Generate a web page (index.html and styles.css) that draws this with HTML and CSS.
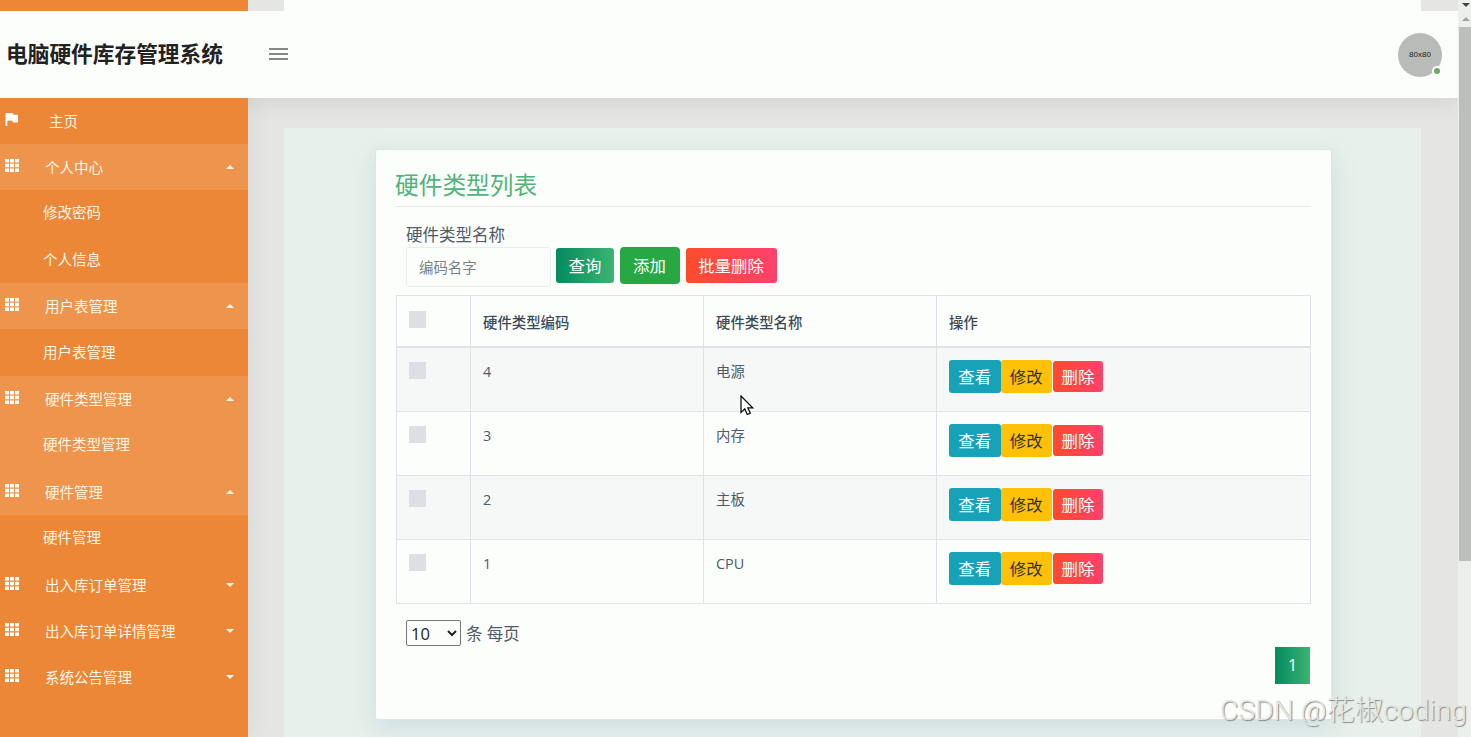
FILE: index.html
```html
<!DOCTYPE html>
<html lang="zh-CN">
<head>
    <meta charset="UTF-8">
    <meta name="viewport" content="width=device-width, initial-scale=1.0">
    <title>电脑硬件库存管理系统</title>
    <link rel="stylesheet" href="styles.css">
</head>
<body>
    <svg class="sprite" width="0" height="0">
        <symbol id="grid" viewBox="0 0 14 13">
            <path d="M0 0h4v3.4H0zM5 0h4v3.4H5zM10 0h4v3.4h-4zM0 4.8h4v3.4H0zM5 4.8h4v3.4H5zM10 4.8h4v3.4h-4zM0 9.6h4V13H0zM5 9.6h4V13H5zM10 9.6h4V13h-4z"/>
        </symbol>
    </svg>

    <div class="page">
        <div class="top-strip">
            <div class="strip-side"></div>
            <div class="strip-main"></div>
        </div>

        <header class="header">
            <h1 class="brand">电脑硬件库存管理系统</h1>
            <div class="toggle"><span></span><span></span><span></span></div>
            <div class="avatar">80x80<i class="online"></i></div>
        </header>

        <div class="wrapper">
            <nav class="sidebar">
                <a class="item home"><svg class="icon" viewBox="0 0 14 14"><path d="M0 0h8l.6 1.8H13.500v8.400H7.800L7.200 8.400H2V14H0z"/></svg><span>主页</span></a>
                <a class="item open"><svg class="icon"><use href="#grid"/></svg><span>个人中心</span><i class="caret up"></i></a>
                <a class="item sub">修改密码</a>
                <a class="item sub">个人信息</a>
                <a class="item open"><svg class="icon"><use href="#grid"/></svg><span>用户表管理</span><i class="caret up"></i></a>
                <a class="item sub">用户表管理</a>
                <a class="item open"><svg class="icon"><use href="#grid"/></svg><span>硬件类型管理</span><i class="caret up"></i></a>
                <a class="item sub active">硬件类型管理</a>
                <a class="item open"><svg class="icon"><use href="#grid"/></svg><span>硬件管理</span><i class="caret up"></i></a>
                <a class="item sub">硬件管理</a>
                <a class="item"><svg class="icon"><use href="#grid"/></svg><span>出入库订单管理</span><i class="caret"></i></a>
                <a class="item"><svg class="icon"><use href="#grid"/></svg><span>出入库订单详情管理</span><i class="caret"></i></a>
                <a class="item"><svg class="icon"><use href="#grid"/></svg><span>系统公告管理</span><i class="caret"></i></a>
            </nav>

            <main class="content">
                <div class="panel">
                    <div class="card">
                        <h3 class="title">硬件类型列表</h3>
                        <div class="search">
                            <label>硬件类型名称</label>
                            <div class="search-row">
                                <input type="text" class="field" placeholder="编码名字">
                                <button class="btn query">查询</button>
                                <button class="btn add">添加</button>
                                <button class="btn danger">批量删除</button>
                            </div>
                        </div>
                        <table class="table">
                            <thead>
                                <tr>
                                    <th class="col-check"><i class="check"></i></th>
                                    <th class="col-data">硬件类型编码</th>
                                    <th class="col-data">硬件类型名称</th>
                                    <th>操作</th>
                                </tr>
                            </thead>
                            <tbody>
                                <tr>
                                    <td><i class="check"></i></td><td>4</td><td>电源</td>
                                    <td><div class="actions"><button class="btn view">查看</button><button class="btn edit">修改</button><button class="btn danger">删除</button></div></td>
                                </tr>
                                <tr>
                                    <td><i class="check"></i></td><td>3</td><td>内存</td>
                                    <td><div class="actions"><button class="btn view">查看</button><button class="btn edit">修改</button><button class="btn danger">删除</button></div></td>
                                </tr>
                                <tr>
                                    <td><i class="check"></i></td><td>2</td><td>主板</td>
                                    <td><div class="actions"><button class="btn view">查看</button><button class="btn edit">修改</button><button class="btn danger">删除</button></div></td>
                                </tr>
                                <tr>
                                    <td><i class="check"></i></td><td>1</td><td>CPU</td>
                                    <td><div class="actions"><button class="btn view">查看</button><button class="btn edit">修改</button><button class="btn danger">删除</button></div></td>
                                </tr>
                            </tbody>
                        </table>
                        <div class="page-size">
                            <select><option>10</option></select>
                            <span>条 每页</span>
                        </div>
                        <div class="pagination"><a class="page-link">1</a></div>
                    </div>
                </div>
            </main>
        </div>
    </div>

    <div class="scrollbar">
        <i class="arrow down"></i>
        <i class="arrow"></i>
        <div class="thumb"></div>
    </div>

    <svg class="cursor" viewBox="0 0 14 21"><path d="M1 1v16.500l3.800-3.600 2.500 5.600 3-1.300-2.500-5.400h4.900z" fill="#fff" stroke="#111" stroke-width="1.300"/></svg>
    <div class="watermark">CSDN @花椒coding</div>
</body>
</html>
```
FILE: styles.css
```css
* {
    box-sizing: border-box;
}
body {
    margin: 0;
    display: flex;
    height: 737px;
    overflow: hidden;
    background: #e5e6e3;
    font-family: "Open Sans", "Noto Sans CJK SC", sans-serif;
    color: #4f5b6a;
}
.sprite {
    position: absolute;
}
.page {
    flex: 1;
    display: flex;
    flex-direction: column;
}

/* header */
.top-strip {
    position: relative;
    z-index: 3;
    height: 11px;
    flex: none;
    display: flex;
    background: #e5e6e3;
}
.strip-side {
    width: 248px;
    background: #eb8736;
}
.strip-main {
    width: 1137px;
    margin-left: 36px;
    background: #fcfefb;
}
.header {
    position: relative;
    z-index: 2;
    height: 86.500px;
    flex: none;
    display: flex;
    align-items: center;
    padding: 0 16px 0 6px;
    background: #fcfefb;
    box-shadow: 0 2px 24px rgba(0, 0, 0, 0.1);
}
.brand {
    width: 263px;
    margin: 0;
    font-size: 21.700px;
    line-height: 32px;
    font-weight: bold;
    color: #222;
}
.toggle {
    width: 19px;
    display: flex;
    flex-direction: column;
    gap: 3px;
}
.toggle span {
    height: 2px;
    background: #858784;
}
.avatar {
    position: relative;
    width: 44px;
    height: 44px;
    margin: 1px 0 0 auto;
    border-radius: 50%;
    background: #b9bbb8;
    font: 8px/44px "Liberation Sans", sans-serif;
    text-align: center;
    color: #222;
}
.online {
    position: absolute;
    right: 0;
    bottom: 1px;
    width: 10px;
    height: 10px;
    border: 2px solid #fcfefb;
    border-radius: 50%;
    background: #6aaa64;
}

/* sidebar */
.wrapper {
    flex: 1;
    display: flex;
    min-height: 0;
}
.sidebar {
    position: relative;
    z-index: 3;
    width: 248px;
    flex: none;
    background: #eb8736;
    box-shadow: 2px 0 24px rgba(0, 0, 0, 0.06);
    clip-path: inset(0 -40px 0 0);
}
.item {
    display: flex;
    align-items: center;
    height: 46.400px;
    padding: 0 14px 0 5px;
    font-size: 14.500px;
    color: #fff6e8;
}
.home span {
    margin-left: 4px;
}
.sub {
    padding: 0 0 3px 43px;
}
.open, .active {
    background: #ee944c;
}
.icon {
    width: 14px;
    height: 13px;
    margin: -3px 26px 0 0;
    fill: #fffdf8;
}
.caret {
    margin: 0 0 0 auto;
    border: 4px solid transparent;
    border-bottom: 0;
    border-top-color: #fff6e8;
}
.caret.up {
    border-top: 0;
    border-bottom: 4px solid #fff6e8;
}
.item span {
    margin-top: -1px;
}

/* content */
.content {
    flex: 1;
    padding: 30.500px 37px 0 36px;
}
.panel {
    height: 100%;
    padding: 21px 89px 0 91px;
    background: #e7f0ea;
}
.card {
    height: 571px;
    padding: 19px 20px 18px;
    border: 1px solid #dce5ea;
    border-radius: 3px;
    background: #fcfefb;
    box-shadow: 0 8px 24px rgba(120, 160, 200, 0.22);
}
.title {
    height: 38px;
    margin: 0 0 16px -1px;
    border-bottom: 1px solid #e9ecea;
    font-size: 23.700px;
    line-height: 32px;
    font-weight: 400;
    color: #4fb478;
}
.search {
    padding-left: 10px;
}
.search label {
    display: block;
    height: 24px;
    font-size: 16.500px;
    line-height: 24px;
}
.search-row {
    display: flex;
    align-items: center;
    height: 40px;
}
.field {
    width: 145px;
    height: 40px;
    margin-right: 5px;
    padding: 0 12px;
    border: 1px solid #e5efeb;
    border-radius: 3px;
    background: #fcfefb;
    font: 14.400px "Open Sans", "Noto Sans CJK SC", sans-serif;
}
.field::placeholder {
    color: #7b8288;
}
.btn {
    height: 35px;
    padding: 2px 0 0;
    border: 0;
    border-radius: 3px;
    font: 16.400px/1 "Open Sans", "Noto Sans CJK SC", sans-serif;
    white-space: nowrap;
    color: #fff;
}
.search-row .btn {
    margin-bottom: 4px;
}
.query {
    width: 58px;
    background: linear-gradient(to right, #048b60, #3cb371);
}
.search .add {
    width: 60px;
    height: 37px;
    margin-left: 5.500px;
    margin-right: 6px;
    border-radius: 4px;
    background: #28a745;
}
.danger {
    background: linear-gradient(to right, #ff4b2b, #ff416c);
}
.search .danger {
    width: 91px;
}

/* table */
.table {
    width: 915px;
    margin-top: 8px;
    border-collapse: collapse;
    table-layout: fixed;
    font-size: 14.400px;
}
.table th, .table td {
    padding: 12px;
    border: 1px solid #dfe2e8;
    text-align: left;
    vertical-align: top;
}
.table th {
    height: 51px;
    padding-top: 16px;
    border-bottom-width: 2px;
    line-height: 22px;
    font-weight: 500;
    color: #3d4b59;
}
.table td {
    height: 64px;
    line-height: 24px;
}
.table tbody tr:nth-child(odd) {
    background: #f6f8f8;
}
.col-check {
    width: 74px;
}
.col-data {
    width: 233px;
}
.check {
    display: block;
    width: 17px;
    height: 17px;
    margin-top: 2px;
    background: #dce0e4;
}
.table th .check {
    margin-top: -1px;
}
.actions {
    display: flex;
    align-items: center;
    height: 33px;
}
.actions .btn {
    width: 51.500px;
    height: 33px;
}
.view {
    background: #17a2b8;
}
.actions .edit {
    background: #ffc107;
    color: #33352c;
}
.actions .danger {
    width: 50px;
    height: 31px;
    margin-left: 1px;
}

/* paging */
.page-size {
    display: flex;
    align-items: center;
    gap: 5px;
    margin: 16px 0 0 10px;
    font-size: 16.500px;
}
.page-size select {
    width: 55px;
    height: 26px;
    padding: 0;
    border: 1px solid #777;
    border-radius: 2px;
    background: #fcfefb;
    font: 16.500px "Open Sans", sans-serif;
    color: #222;
}
.pagination {
    display: flex;
    justify-content: flex-end;
    padding-top: 1px;
}
.page-link {
    width: 35px;
    height: 37px;
    margin-right: 1px;
    background: linear-gradient(to right, #048b60, #3cb371);
    font-size: 16px;
    line-height: 37px;
    text-align: center;
    color: #fff;
}

/* scrollbar */
.scrollbar {
    position: relative;
    z-index: 3;
    width: 13px;
    display: flex;
    flex-direction: column;
    align-items: flex-end;
    background: #edefec;
}
.arrow {
    margin: 10px 1px 6px 0;
    border: 4px solid transparent;
    border-top: 0;
    border-bottom-color: #a2a4a1;
}
.arrow.down {
    margin: 3px 1px 0 0;
    border-top: 4px solid #444;
    border-bottom: 0;
}
.thumb {
    width: 12px;
    height: 534px;
    background: #bdbfbc;
}

/* overlays */
.cursor {
    position: absolute;
    left: 740px;
    top: 395px;
    width: 14px;
    height: 21px;
}
.watermark {
    position: absolute;
    z-index: 4;
    right: 4px;
    top: 692px;
    font: 300 28.300px/38px Roboto, "Noto Sans CJK SC", sans-serif;
    white-space: nowrap;
    color: #e4e6e5;
    text-shadow: 1px 1px 1px #888;
}
```
